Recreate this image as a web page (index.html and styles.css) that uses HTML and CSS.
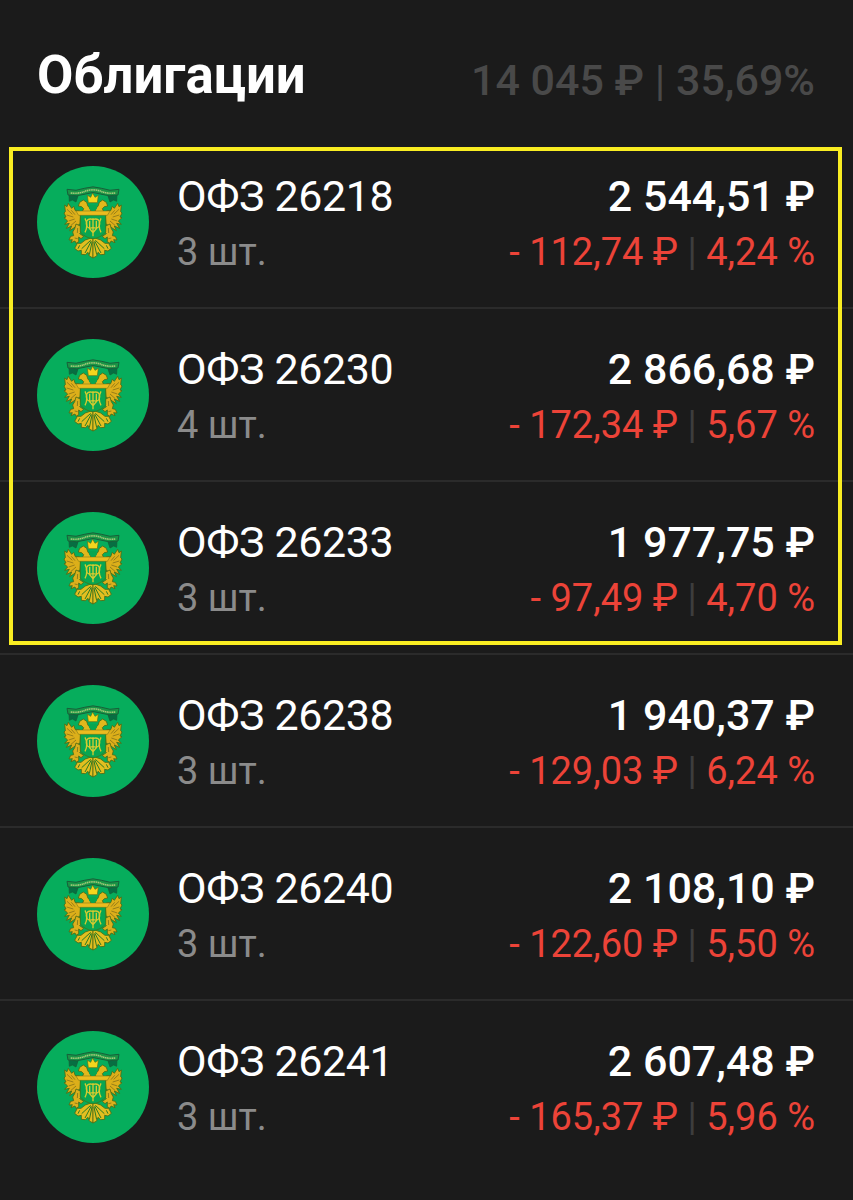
FILE: index.html
```
<!DOCTYPE html>
<html lang="ru">
<head>
    <meta charset="UTF-8">
    <meta name="viewport" content="width=device-width, initial-scale=1.0">
    <title>Облигации</title>
    <link rel="stylesheet" href="styles.css">
</head>
<body>
    <!-- Emblem, shared by all rows -->
    <svg class="sprite" width="0" height="0">
        <symbol id="emblem" viewBox="21 18 336 336">
            <circle cx="189" cy="186" r="168" fill="#06ad5c"/>
            <g id="emblem-half" stroke="#4d6a14" stroke-width="2.5" stroke-linejoin="round">
                <!-- wing -->
                <path fill="#dcaf1a" d="M152 166 L148 152 L136 152 L131 139 L125 145 L115 130 L111 140 L104 135 L106 155 L102 159 L108 171 L102 173 L113 183 L104 193 L118 190 L109 205 L125 198 L119 212 L136 201 L150 192 Z"/>
                <path fill="none" stroke="#8a7418" d="M111 148 L127 163 M110 165 L130 171 M116 183 L134 177 M122 197 L138 183 M124 151 L135 164"/>
                <!-- head and neck -->
                <path fill="#e2b81c" d="M145 138 L149 127 L160 120 L170 127 L174 139 L182 146 L182 156 L156 157 L161 146 L155 140 Z"/>
                <!-- leg -->
                <path fill="#dcb01c" d="M138 192 L151 198 L155 213 L149 221 L161 229 L153 236 L146 231 L146 245 L138 250 L135 243 L123 248 L127 239 L117 240 L122 229 L131 227 L128 216 L134 206 Z"/>
                <path fill="none" stroke="#80741a" d="M143 204 L142 219 M134 234 L143 236"/>
                <!-- tail feathers -->
                <path fill="#e2be20" d="M183 234 L166 240 L153 250 L142 250 L134 265 L144 273 L154 271 L154 283 L166 284 L174 277 L178 288 L189 294 L189 234 Z"/>
                <path fill="none" stroke="#2c7a24" stroke-width="3" d="M182 241 L155 266 M184 243 L165 279 M186 246 L178 284 M149 256 L144 266"/>
            </g>
            <use href="#emblem-half" transform="translate(378 0) scale(-1 1)"/>
            <!-- shield and crossbar -->
            <path d="M151 162 H227 V216 Q212 234 189 236 Q166 234 151 216 Z" fill="#08a651" stroke="#368024" stroke-width="3"/>
            <path d="M138 153 H240 L232 166 H146 Z" fill="#ebbc1f" stroke="#6c7018" stroke-width="1.5"/>
            <path d="M179 134 L199 134 L201 147 L189 153 L177 147 Z" fill="#08a651"/>
            <!-- monogram -->
            <g fill="none" stroke="#d6cb30" stroke-width="4">
                <path d="M189 178 Q169 173 169 191 Q169 208 189 203 Q209 208 209 191 Q209 173 189 178 Z"/>
                <path d="M189 175 V229 M165 175 Q176 195 165 217 M213 175 Q202 195 213 217 M179 182 V206 L189 218 L199 206 V182"/>
            </g>
            <!-- crown -->
            <path d="M175 128 L172 106 L182 112 L188 99 L195 112 L205 106 L202 128 Z" fill="#f4d51d" stroke="#5b7019" stroke-width="2"/>
            <!-- ribbon -->
            <path d="M117 104 L118 124 L127 120 L138 126 L144 108 Z M261 104 L260 124 L251 120 L240 126 L234 108 Z" fill="#076e42" stroke="#155d35" stroke-width="2"/>
            <path d="M111 88 Q139 95 163 85 Q189 76 215 85 Q239 95 267 88 L264 105 Q237 111 211 102 Q189 93 167 102 Q141 111 114 105 Z" fill="#1a9446" stroke="#17603a" stroke-width="3"/>
            <path d="M122 99 Q147 102 167 93 Q189 86 211 93 Q231 102 256 99" fill="none" stroke="#a2c978" stroke-width="5" stroke-dasharray="4 1.5"/>
        </symbol>
    </svg>

    <header class="header">
        <h1 class="title">Облигации</h1>
        <div class="total">14 045 ₽ <span class="bar">|</span> 35,69%</div>
    </header>

    <main>
        <section class="selected">
            <div class="row">
                <svg class="logo"><use href="#emblem"/></svg>
                <div class="info">
                    <div class="name">ОФЗ 26218</div>
                    <div class="count">3 шт.</div>
                </div>
                <div class="money">
                    <div class="price">2 544,51 ₽</div>
                    <div class="change">- 112,74 ₽ <span class="sep">|</span> 4,24 %</div>
                </div>
            </div>
            <div class="row">
                <svg class="logo"><use href="#emblem"/></svg>
                <div class="info">
                    <div class="name">ОФЗ 26230</div>
                    <div class="count">4 шт.</div>
                </div>
                <div class="money">
                    <div class="price">2 866,68 ₽</div>
                    <div class="change">- 172,34 ₽ <span class="sep">|</span> 5,67 %</div>
                </div>
            </div>
            <div class="row">
                <svg class="logo"><use href="#emblem"/></svg>
                <div class="info">
                    <div class="name">ОФЗ 26233</div>
                    <div class="count">3 шт.</div>
                </div>
                <div class="money">
                    <div class="price">1 977,75 ₽</div>
                    <div class="change">- 97,49 ₽ <span class="sep">|</span> 4,70 %</div>
                </div>
            </div>
        </section>

        <section>
            <div class="row">
                <svg class="logo"><use href="#emblem"/></svg>
                <div class="info">
                    <div class="name">ОФЗ 26238</div>
                    <div class="count">3 шт.</div>
                </div>
                <div class="money">
                    <div class="price">1 940,37 ₽</div>
                    <div class="change">- 129,03 ₽ <span class="sep">|</span> 6,24 %</div>
                </div>
            </div>
            <div class="row">
                <svg class="logo"><use href="#emblem"/></svg>
                <div class="info">
                    <div class="name">ОФЗ 26240</div>
                    <div class="count">3 шт.</div>
                </div>
                <div class="money">
                    <div class="price">2 108,10 ₽</div>
                    <div class="change">- 122,60 ₽ <span class="sep">|</span> 5,50 %</div>
                </div>
            </div>
            <div class="row last">
                <svg class="logo"><use href="#emblem"/></svg>
                <div class="info">
                    <div class="name">ОФЗ 26241</div>
                    <div class="count">3 шт.</div>
                </div>
                <div class="money">
                    <div class="price">2 607,48 ₽</div>
                    <div class="change">- 165,37 ₽ <span class="sep">|</span> 5,96 %</div>
                </div>
            </div>
        </section>
    </main>
</body>
</html>
```
FILE: styles.css
```
* {
    box-sizing: border-box;
}

body {
    margin: 0;
    min-height: 1200px;
    background-color: #1b1b1b;
    color: #ffffff;
    font-family: Roboto, sans-serif;
}

.sprite {
    display: block;
}

.header {
    display: flex;
    justify-content: space-between;
    align-items: flex-start;
    height: 136px;
    padding: 44px 38px 0 37px;
}

.title {
    margin: 0;
    font-size: 52.8px;
    line-height: 63px;
    font-weight: 700;
}

.total {
    padding-top: 6px;
    font-size: 43px;
    line-height: 60px;
    font-weight: 500;
    color: #494949;
}

.bar {
    font-weight: 400;
}

.row {
    display: flex;
    height: 173px;
    padding: 30px 38px 0 37px;
    border-bottom: 2px solid #2b2b2b;
}

.row.last {
    border-bottom: none;
}

.logo {
    width: 112px;
    height: 112px;
    margin-right: 28px;
    flex-shrink: 0;
}

.info {
    flex: 1;
}

.money {
    text-align: right;
}

.name,
.price {
    font-size: 43px;
    line-height: 60px;
}

.name {
    letter-spacing: -0.4px;
}

.price {
    font-weight: 500;
}

.count,
.change {
    font-size: 38px;
    line-height: 52px;
}

.count {
    color: #8b8b8b;
}

.change {
    color: #ec4338;
}

.sep {
    color: #3d3d3d;
}

/* Yellow frame around the selected rows */
.selected {
    position: relative;
}

.selected::after {
    content: "";
    position: absolute;
    top: 11px;
    right: 11px;
    bottom: 10px;
    left: 9px;
    border: 4px solid #f9ed22;
}
```
